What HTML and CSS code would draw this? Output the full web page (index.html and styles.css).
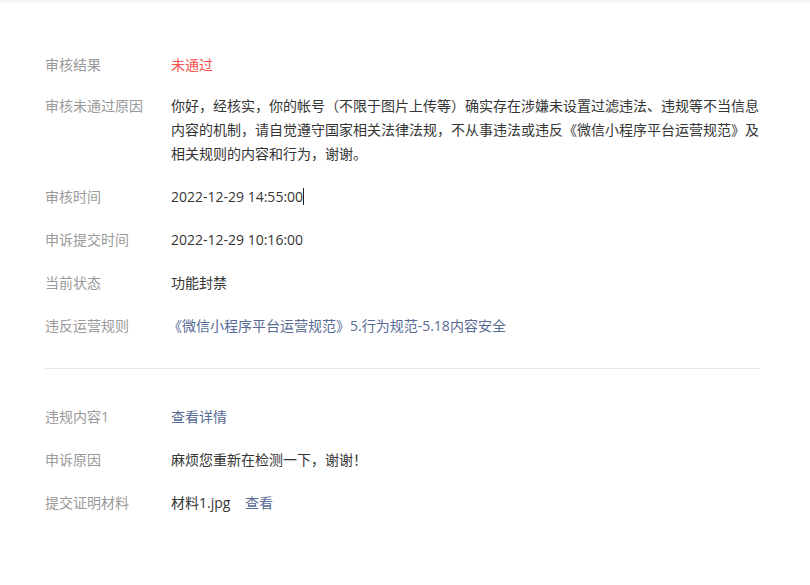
FILE: index.html
```html
<!DOCTYPE html>
<html lang="zh-CN">
<head>
    <meta charset="UTF-8">
    <meta name="viewport" content="width=device-width, initial-scale=1.0">
    <title>申诉详情</title>
    <link rel="stylesheet" href="styles.css">
</head>
<body>
    <div class="top-bar"></div>

    <main class="detail">
        <!-- 审核信息 -->
        <section class="group">
            <div class="row">
                <div class="label">审核结果</div>
                <div class="value fail">未通过</div>
            </div>
            <div class="row">
                <div class="label">审核未通过原因</div>
                <div class="value">你好，经核实，你的帐号（不限于图片上传等）确实存在涉嫌未设置过滤违法、违规等不当信息内容的机制，请自觉遵守国家相关法律法规，不从事违法或违反《微信小程序平台运营规范》及相关规则的内容和行为，谢谢。</div>
            </div>
            <div class="row">
                <div class="label">审核时间</div>
                <div class="value">2022-12-29 14:55:00<span class="caret"></span></div>
            </div>
            <div class="row">
                <div class="label">申诉提交时间</div>
                <div class="value">2022-12-29 10:16:00</div>
            </div>
            <div class="row">
                <div class="label">当前状态</div>
                <div class="value">功能封禁</div>
            </div>
            <div class="row">
                <div class="label">违反运营规则</div>
                <div class="value"><a href="#" class="link rule">《微信小程序平台运营规范》5.行为规范-5.18内容安全</a></div>
            </div>
        </section>

        <hr class="divider">

        <!-- 申诉内容 -->
        <section class="group appeal">
            <div class="row">
                <div class="label">违规内容1</div>
                <div class="value"><a href="#" class="link">查看详情</a></div>
            </div>
            <div class="row">
                <div class="label">申诉原因</div>
                <div class="value">麻烦您重新在检测一下，谢谢！</div>
            </div>
            <div class="row">
                <div class="label">提交证明材料</div>
                <div class="value">材料1.jpg <a href="#" class="link file-link">查看</a></div>
            </div>
        </section>
    </main>
</body>
</html>
```

FILE: styles.css
```css
body {
    margin: 0;
    padding: 0;
    background: #fff;
    color: #353535;
    font-family: "Open Sans", "Noto Sans CJK SC", sans-serif;
    font-size: 14px;
    line-height: 24px;
}

.top-bar {
    height: 3px;
    background: #f6f8fa;
}

.detail {
    width: 715px;
    margin-left: 45px;
    padding-top: 50px;
}

.row {
    display: flex;
    margin-bottom: 19px;
}

.group .row:first-child {
    margin-bottom: 17px;
}

.appeal .row:first-child {
    margin-bottom: 19px;
}

.label {
    flex: 0 0 126px;
    color: #9a9a9a;
}

.value {
    flex: 1;
}

.fail {
    color: #fa5151;
}

.link {
    color: #576b95;
    text-decoration: none;
}

.rule {
    margin-left: -3px;
}

.file-link {
    margin-left: 11px;
}

.caret {
    display: inline-block;
    width: 1px;
    height: 17px;
    background: #222;
    vertical-align: -3px;
}

.divider {
    border: 0;
    border-top: 1px solid #e7e7e7;
    margin: 30px 0 36px;
}
```
